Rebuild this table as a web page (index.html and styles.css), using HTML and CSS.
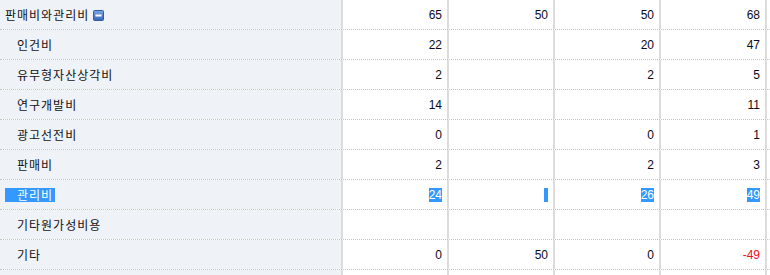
FILE: index.html
```html
<!DOCTYPE html>
<html lang="ko">
<head>
<meta charset="utf-8">
<link rel="stylesheet" href="styles.css">
</head>
<body>
<div class="grid">
  <div class="row">
    <div class="label top">판매비와관리비<span class="toggle"><svg width="11" height="11" viewBox="0 0 11 11"><defs><linearGradient id="g" x1="0" y1="0" x2="0" y2="1"><stop offset="0" stop-color="#7fa6e0"/><stop offset="1" stop-color="#3565b8"/></linearGradient></defs><rect x="0.5" y="0.5" width="10" height="10" rx="1" fill="url(#g)" stroke="#2f5aa6"/><rect x="2.5" y="4.5" width="6" height="2" fill="#fff"/></svg></span></div>
    <div class="cell">65</div><div class="cell">50</div><div class="cell">50</div><div class="cell">68</div><div class="end"></div>
  </div>
  <div class="row">
    <div class="label">인건비</div>
    <div class="cell">22</div><div class="cell"></div><div class="cell">20</div><div class="cell">47</div><div class="end"></div>
  </div>
  <div class="row">
    <div class="label">유무형자산상각비</div>
    <div class="cell">2</div><div class="cell"></div><div class="cell">2</div><div class="cell">5</div><div class="end"></div>
  </div>
  <div class="row">
    <div class="label">연구개발비</div>
    <div class="cell">14</div><div class="cell"></div><div class="cell"></div><div class="cell">11</div><div class="end"></div>
  </div>
  <div class="row">
    <div class="label">광고선전비</div>
    <div class="cell">0</div><div class="cell"></div><div class="cell">0</div><div class="cell">1</div><div class="end"></div>
  </div>
  <div class="row">
    <div class="label">판매비</div>
    <div class="cell">2</div><div class="cell"></div><div class="cell">2</div><div class="cell">3</div><div class="end"></div>
  </div>
  <div class="row">
    <div class="label sel-label"><span class="sel">관리비</span></div>
    <div class="cell"><span class="sel">24</span></div><div class="cell"><span class="sel empty"></span></div><div class="cell"><span class="sel">26</span></div><div class="cell"><span class="sel">49</span></div><div class="end"></div>
  </div>
  <div class="row">
    <div class="label">기타원가성비용</div>
    <div class="cell"></div><div class="cell"></div><div class="cell"></div><div class="cell"></div><div class="end"></div>
  </div>
  <div class="row">
    <div class="label">기타</div>
    <div class="cell">0</div><div class="cell">50</div><div class="cell">0</div><div class="cell neg">-49</div><div class="end"></div>
  </div>
  <div class="row">
    <div class="label"></div>
    <div class="cell"></div><div class="cell"></div><div class="cell"></div><div class="cell"></div><div class="end"></div>
  </div>
</div>
</body>
</html>
```
FILE: styles.css
```css
html, body {
  margin: 0;
  padding: 0;
  background: #ffffff;
}
.grid {
  width: 770px;
  height: 275px;
  overflow: hidden;
}
.row {
  display: flex;
  height: 30px;
  box-sizing: border-box;
  border-bottom: 1px dotted #c4c4c4;
}
.label {
  width: 341px;
  flex: none;
  background: #eff2f7;
  display: flex;
  align-items: center;
  padding-left: 17px;
  box-sizing: border-box;
  font-family: "Noto Sans CJK KR", sans-serif;
  font-size: 12px;
  letter-spacing: 1px;
  color: #111;
}
.label.top {
  padding-left: 5px;
}
.toggle {
  display: inline-flex;
  margin-left: 4px;
  margin-top: 1px;
}
.cell {
  width: 106px;
  flex: none;
  box-sizing: border-box;
  border-left: 2px solid #dcdcdc;
  display: flex;
  align-items: center;
  justify-content: flex-end;
  padding-right: 5px;
  font-family: "Liberation Sans", Arial, sans-serif;
  font-size: 12px;
  color: #0a0a1a;
}
.end {
  flex: 1;
  border-left: 2px solid #dcdcdc;
}
.neg {
  color: #e8101a;
}
.sel-label {
  padding-left: 5px;
}
.sel {
  background: #3399ff;
  color: #fff;
  line-height: 14px;
  display: inline-block;
}
.sel-label .sel {
  padding: 0 2px 0 12px;
}
.sel.empty {
  width: 4px;
  height: 14px;
}
```
